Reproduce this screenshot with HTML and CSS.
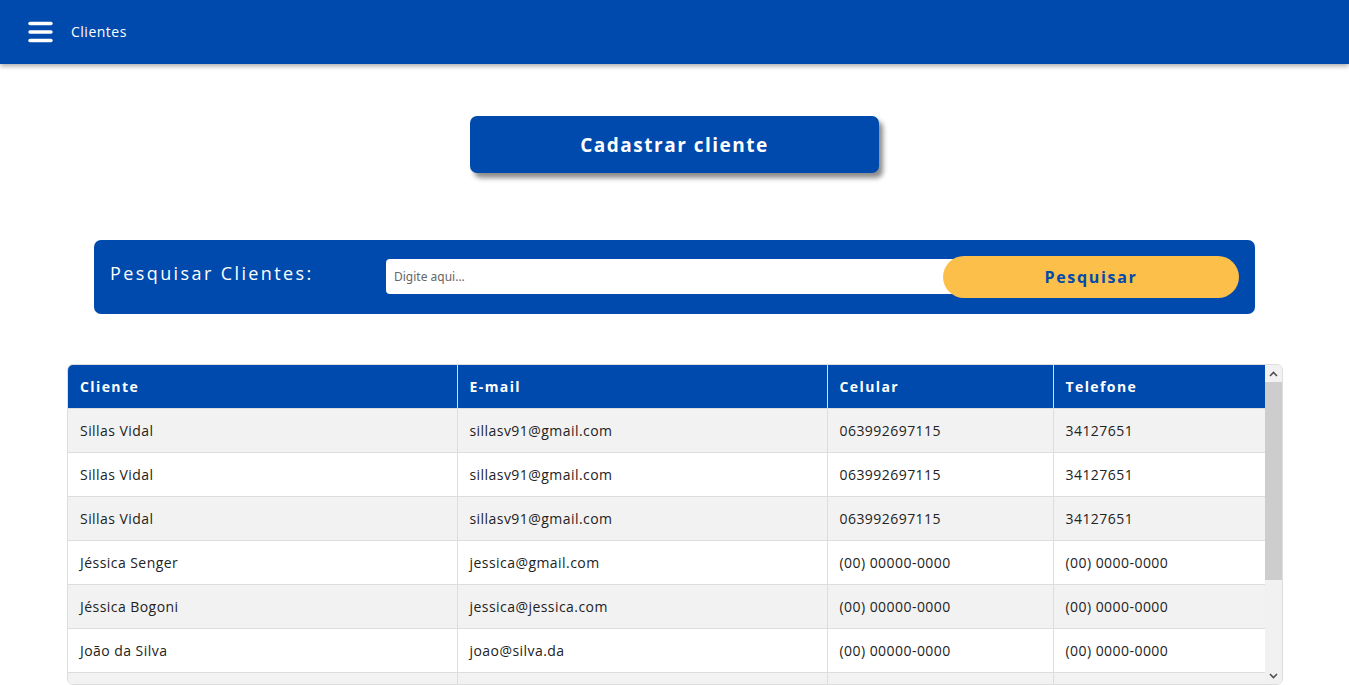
FILE: index.html
```html
<!DOCTYPE html>
<html lang="pt-BR">
<head>
<meta charset="utf-8">
<title>Clientes</title>
<link rel="stylesheet" href="styles.css">
</head>
<body>
<header class="topbar">
  <button class="menu-btn" aria-label="Menu">
    <svg width="26" height="22" viewBox="0 0 26 22"><g stroke="#fff" stroke-width="3.4" stroke-linecap="round"><line x1="2" y1="2.5" x2="23" y2="2.5"/><line x1="2" y1="11" x2="23" y2="11"/><line x1="2" y1="19.5" x2="23" y2="19.5"/></g></svg>
  </button>
  <span class="title">Clientes</span>
</header>
<main class="content">
  <div class="cad-wrap">
    <button class="cad-btn">Cadastrar cliente</button>
  </div>
  <form class="search">
    <label class="search-label">Pesquisar Clientes:</label>
    <div class="search-field">
      <input class="search-input" type="text" placeholder="Digite aqui...">
      <button class="search-btn" type="button">Pesquisar</button>
    </div>
  </form>
  <div class="table-wrap">
    <div class="table-clip">
      <table class="grid">
        <thead>
          <tr><th class="c1">Cliente</th><th class="c2">E-mail</th><th class="c3">Celular</th><th class="c4">Telefone</th></tr>
        </thead>
        <tbody>
          <tr><td>Sillas Vidal</td><td>sillasv91@gmail.com</td><td>063992697115</td><td>34127651</td></tr>
          <tr><td>Sillas Vidal</td><td>sillasv91@gmail.com</td><td>063992697115</td><td>34127651</td></tr>
          <tr><td>Sillas Vidal</td><td>sillasv91@gmail.com</td><td>063992697115</td><td>34127651</td></tr>
          <tr><td>Jéssica Senger</td><td>jessica@gmail.com</td><td>(00) 00000-0000</td><td>(00) 0000-0000</td></tr>
          <tr><td>Jéssica Bogoni</td><td>jessica@jessica.com</td><td>(00) 00000-0000</td><td>(00) 0000-0000</td></tr>
          <tr><td>João da Silva</td><td>joao@silva.da</td><td>(00) 00000-0000</td><td>(00) 0000-0000</td></tr>
          <tr><td></td><td></td><td></td><td></td></tr>
        </tbody>
      </table>
    </div>
    <div class="vscroll" aria-hidden="true">
      <div class="vs-btn">
        <svg width="9" height="6" viewBox="0 0 9 6"><polyline points="1,5 4.5,1.5 8,5" fill="none" stroke="#505050" stroke-width="1.6"/></svg>
      </div>
      <div class="vs-track"><div class="vs-thumb"></div></div>
      <div class="vs-btn">
        <svg width="9" height="6" viewBox="0 0 9 6"><polyline points="1,1 4.5,4.5 8,1" fill="none" stroke="#505050" stroke-width="1.6"/></svg>
      </div>
    </div>
  </div>
</main>
</body>
</html>
```
FILE: styles.css
```css
* { box-sizing: border-box; }
html, body { margin: 0; padding: 0; overflow: hidden; }
body {
  font-family: "Open Sans", "Liberation Sans", sans-serif;
  color: #222;
  background: #fff;
  height: 685px;
}
.topbar {
  height: 64px;
  background: #004aad;
  display: flex;
  align-items: center;
  padding-left: 28px;
  box-shadow: 0 2px 5px rgba(0,0,0,0.35);
  position: relative;
  z-index: 2;
}
.menu-btn {
  background: none;
  border: 0;
  padding: 0;
  width: 26px;
  height: 22px;
  display: flex;
}
.title {
  color: #fff;
  font-size: 14px;
  letter-spacing: 0.5px;
  margin-left: 17px;
  margin-top: -2px;
}
.content {
  display: flex;
  flex-direction: column;
  align-items: center;
}
.cad-wrap { padding-top: 52px; }
.cad-btn {
  width: 409px;
  height: 57px;
  background: #004aad;
  color: #fff;
  border: 0;
  border-radius: 7px;
  font-family: "Open Sans", sans-serif;
  font-weight: 700;
  font-size: 19px;
  letter-spacing: 1.5px;
  box-shadow: 4px 5px 5px rgba(0,0,0,0.45);
}
.search {
  margin-top: 67px;
  width: 1161px;
  height: 74px;
  background: #004aad;
  border-radius: 7px;
  display: flex;
  align-items: center;
  padding: 0 16px;
}
.search-label {
  color: #fff;
  font-size: 18px;
  letter-spacing: 2.4px;
  width: 276px;
  margin-top: -8px;
}
.search-field {
  display: flex;
  align-items: center;
}
.search-input {
  width: 580px;
  height: 35px;
  border: 0;
  border-radius: 4px;
  padding: 0 8px;
  margin-top: -2px;
  font-family: "Noto Sans", sans-serif;
  font-size: 12px;
  outline: none;
}
.search-input::placeholder { color: #666; }
.search-btn {
  margin-left: -23px;
  width: 296px;
  height: 42px;
  border: 0;
  border-radius: 21px;
  background: #fcbf4a;
  color: #004aad;
  font-family: "Open Sans", sans-serif;
  font-weight: 700;
  font-size: 16px;
  letter-spacing: 1.7px;
}
.table-wrap {
  margin-top: 50px;
  width: 1216px;
  height: 321px;
  display: flex;
  border: 1px solid #ddd;
  border-radius: 6px;
  overflow: hidden;
  align-self: flex-start;
  margin-left: 67px;
}
.table-clip {
  flex: 1;
  overflow: hidden;
}
.vscroll {
  width: 17px;
  display: flex;
  flex-direction: column;
  background: #f1f1f1;
}
.vs-btn {
  height: 17px;
  display: flex;
  align-items: center;
  justify-content: center;
}
.vs-track {
  flex: 1;
  padding: 0 0 0 0;
}
.vs-thumb {
  height: 198px;
  background: #cdcdcd;
}
.grid {
  width: 100%;
  border-collapse: collapse;
  font-size: 14px;
}
.grid th {
  background: #004aad;
  color: #fff;
  text-align: left;
  font-weight: 700;
  letter-spacing: 1.4px;
  height: 43px;
  padding: 0 12px;
  border-left: 1px solid #ddd;
}
.grid th:first-child, .grid td:first-child { border-left: 0; }
.grid td {
  height: 44px;
  padding: 0 12px;
  border-left: 1px solid #ddd;
  border-top: 1px solid #ddd;
  color: #222;
  letter-spacing: 0.45px;
}
.grid tbody tr:nth-child(odd) { background: #f2f2f2; }
.c1 { width: 389px; }
.c2 { width: 370px; }
.c3 { width: 226px; }
```
